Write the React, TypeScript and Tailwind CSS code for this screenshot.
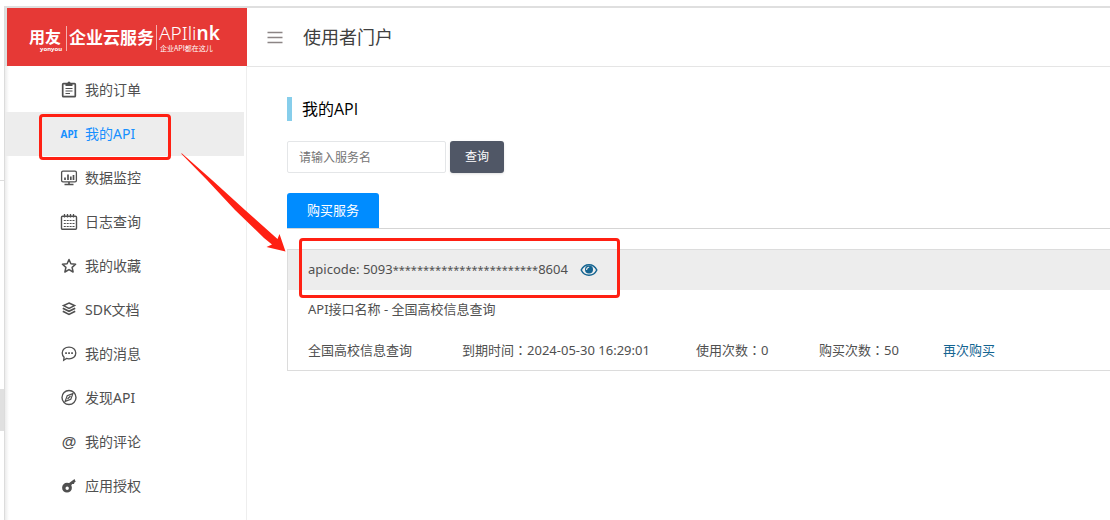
import React from 'react';

const iconProps = {
  viewBox: '0 0 18 18',
  className: 'h-[18px] w-[18px] shrink-0',
  fill: 'none',
  stroke: 'currentColor',
  strokeWidth: 1.5,
  'aria-hidden': true,
};

const OrderIcon = () => (
  <svg {...iconProps}>
    <rect x="2.7" y="2.7" width="12.6" height="13" rx=".8" strokeWidth="1.7" />
    <path d="M5.5 2h2a1.5 1.5 0 0 1 3 0h2v3h-7z" fill="currentColor" stroke="none" />
    <path d="M5.5 7.5h7M5.5 10h7M5.5 12.5h4.5" strokeWidth="1.2" />
  </svg>
);

const MonitorIcon = () => (
  <svg {...iconProps}>
    <rect x="1.6" y="2.2" width="14.8" height="10.6" rx="1.4" strokeWidth="1.3" />
    <path d="M5 8.5V11M8 5.5V11M10.800 7.500V11M13.500 6v5" strokeWidth="1.700" />
    <path d="M9 13v2M4.500 15.500h9" strokeWidth="1.600" />
  </svg>
);

const CalendarIcon = () => (
  <svg {...iconProps}>
    <rect x="1.500" y="3.200" width="15" height="13" rx="1" strokeWidth="1.400" />
    <path d="M4.500 1v3.500M7.500 1v3.500M10.500 1v3.500M13.500 1v3.500" strokeWidth="1.300" />
    <path d="M3.800 7.500h11M3.800 10.500h11M3.800 13.500h11" strokeWidth="1.200" strokeDasharray="2 .9" />
  </svg>
);

const StarIcon = () => (
  <svg {...iconProps}>
    <path
      d="M9 2.500l1.900 4.300 4.700.5-3.500 3.100 1 4.600L9 12.600 4.900 15l1-4.600-3.500-3.100 4.700-.5z"
      strokeWidth="1.500"
      strokeLinejoin="round"
    />
  </svg>
);

const LayersIcon = () => (
  <svg {...iconProps}>
    <path d="M9 2l5.500 2.600L9 7.300 3.500 4.600z" strokeWidth="1.500" />
    <path d="M2.800 7.200L9 10.300l6.200-3.100M2.800 10.300L9 13.400l6.200-3.100" strokeWidth="1.700" />
  </svg>
);

const MessageIcon = () => (
  <svg {...iconProps}>
    <path
      d="M9 2.200c3.900 0 6.800 2.400 6.800 5.800S12.900 13.800 9 13.800c-.9 0-1.700-.1-2.500-.4L3.700 15.200l.4-3C2.800 11 2.200 9.700 2.200 8c0-3.400 2.900-5.800 6.800-5.800z"
      strokeWidth="1.300"
    />
    <path d="M5.200 7.200h1.700v1.700H5.200zM8.200 7.200h1.700v1.700H8.200zM11.200 7.200h1.700v1.700h-1.700z" fill="currentColor" stroke="none" />
  </svg>
);

const CompassIcon = () => (
  <svg {...iconProps}>
    <circle cx="9" cy="8.500" r="7" strokeWidth="1.400" />
    <path d="M12.900 4.600l-2.100 5.600-5.700 2.200 2.100-5.700z" strokeWidth="1.200" />
    <path d="M7.500 10l3-3" strokeWidth="1.200" />
  </svg>
);

const AtIcon = () => (
  <span className="w-[18px] shrink-0 text-center font-['Liberation_Sans',sans-serif] text-[15px] font-bold leading-4" aria-hidden="true">
    @
  </span>
);

const KeyIcon = () => (
  <svg {...iconProps}>
    <path
      d="M7 5.800a4.900 4.900 0 1 0 0 9.800 4.900 4.900 0 0 0 0-9.800zm.2 3.700a1.700 1.700 0 1 1 0 3.400 1.700 1.700 0 0 1 0-3.400z"
      fill="currentColor"
      fillRule="evenodd"
      stroke="none"
    />
    <path d="M8.500 6.500L14.500 2l1.200 2.800-1.300.6-.4 1.600-1.800-.1-1.200 1.600z" fill="currentColor" stroke="none" />
  </svg>
);

const ApiIcon = () => (
  <span className="w-[18px] shrink-0 text-center font-['Noto_Sans',sans-serif] text-[10px] font-bold leading-4" aria-hidden="true">
    API
  </span>
);

const menu = [
  { label: '我的订单', icon: OrderIcon },
  { label: '我的API', icon: ApiIcon, active: true },
  { label: '数据监控', icon: MonitorIcon },
  { label: '日志查询', icon: CalendarIcon },
  { label: '我的收藏', icon: StarIcon },
  { label: 'SDK文档', icon: LayersIcon },
  { label: '我的消息', icon: MessageIcon },
  { label: '发现API', icon: CompassIcon },
  { label: '我的评论', icon: AtIcon },
  { label: '应用授权', icon: KeyIcon },
];

const Logo = () => (
  <svg
    viewBox="0 0 240 58"
    className="h-[58px] w-60 bg-[#e63936] font-['Noto_Sans_CJK_SC',sans-serif]"
    fill="#fff"
    role="img"
    aria-label="用友 企业云服务 APIlink"
  >
    <text x="22" y="35" fontSize="16" fontWeight="700">用友</text>
    <text x="33" y="43" fontSize="6" fontWeight="700" fontFamily="Noto Sans">yonyou</text>
    <path d="M59.500 18v25M149.500 17v25" stroke="#fff" strokeOpacity=".6" />
    <text x="62" y="36" fontSize="17" fontWeight="700">企业云服务</text>
    <text x="152" y="32" fontSize="19" fontWeight="300" fontFamily="Noto Sans">
      APIli<tspan fontWeight="600">nk</tspan>
    </text>
    <text x="153" y="43" fontSize="7">企业API都在这儿</text>
  </svg>
);

const Colon = () => <span className="font-['Noto_Sans_CJK_TC',sans-serif]">：</span>;

const EyeIcon = () => (
  <svg viewBox="0 0 18 14" className="h-[14px] w-[18px]" fill="none" stroke="currentColor" aria-hidden="true">
    <path d="M1.200 7C2.800 3.600 5.500 1.700 9 1.700S15.200 3.600 16.800 7c-1.600 3.400-4.300 5.300-7.800 5.300S2.800 10.400 1.200 7z" strokeWidth="1.500" />
    <circle cx="9" cy="6.500" r="4" fill="currentColor" stroke="none" />
    <path d="M6.600 7a2.400 2.400 0 0 1 2.600-2.700" stroke="#ededed" strokeWidth="1.100" />
  </svg>
);

const Annotations = () => (
  <div className="pointer-events-none absolute inset-0">
    <div className="absolute left-[39px] top-[114px] h-[46px] w-[132px] rounded border-3 border-[#ff2013]" />
    <div className="absolute left-[299px] top-[238px] h-[60px] w-[321px] rounded border-3 border-[#ff2013]" />
    <svg viewBox="0 0 106 100" className="absolute left-[180px] top-[153px] h-[100px] w-[106px]" aria-hidden="true">
      <path d="M1 .5L2 .5 32 27 65 57 97.500 86 99.500 81 105.500 98.500 86.500 94 92 91.500 84 85 55 57 27 27z" fill="#ff2013" />
    </svg>
  </div>
);

const App = () => {
  return (
    <div className="relative flex min-h-screen bg-white font-['Noto_Sans','Noto_Sans_CJK_SC',sans-serif] text-[#505050]">
      <div className="flex w-1 shrink-0 flex-col">
        <div className="h-[181px] border-b border-[#ddd]" />
        <div className="mt-52 h-[42px] bg-[#e0e0e0]" />
      </div>

      <div className="flex min-w-0 flex-1 flex-col">
        <div className="h-2 shrink-0 border-b-2 border-[#dfdfdf]" />
        <div className="flex flex-1">
          <aside className="flex w-[243px] shrink-0 flex-col border-l border-[#dcdcdc]">
            <div className="flex justify-end bg-[#dde0e0]">
              <Logo />
            </div>
            <nav className="flex-1 border-r border-[#eee] bg-linear-to-r from-[#ececec] to-white to-[4px] pt-0.5">
              <ul>
                {menu.map(({ label, icon: Icon, active }) => (
                  <li key={label} className="pr-0.5">
                    <a
                      href="#"
                      className={
                        active
                          ? 'flex h-11 items-center gap-[7px] bg-[#ededed] pl-[55px] text-sm text-[#1890ff]'
                          : 'flex h-11 items-center gap-[7px] pl-[55px] text-sm'
                      }
                    >
                      <Icon />
                      <span>{label}</span>
                    </a>
                  </li>
                ))}
              </ul>
            </nav>
          </aside>

          <div className="min-w-0 flex-1">
            <header className="flex h-[59px] items-center gap-5 border-b border-[#e5e5e5] pl-5">
              <button type="button" aria-label="菜单" className="text-[#8c8585]">
                <svg viewBox="0 0 16 14" className="h-[14px] w-4" stroke="currentColor" aria-hidden="true">
                  <path d="M.5 2.500h15M.5 7.500h15M.5 12.500h15" strokeWidth="1.700" />
                </svg>
              </button>
              <h1 className="text-lg text-[#404040]">使用者门户</h1>
            </header>

            <main className="pl-10 pt-[30px]">
              <h2 className="border-l-5 border-[#87ceeb] pl-2.5 font-['Open_Sans','Noto_Sans_CJK_SC',sans-serif] text-base leading-6 text-black">
                我的API
              </h2>

              <form className="mt-5 flex gap-1" onSubmit={(e) => e.preventDefault()}>
                <input
                  type="text"
                  aria-label="服务名"
                  placeholder="请输入服务名"
                  className="h-8 w-[159px] rounded-xs border border-[#e4e6e8] px-[11px] text-xs placeholder:text-[#757575]"
                />
                <button type="submit" className="h-8 w-[54px] rounded-[3px] bg-[#505766] text-xs text-white shadow-sm">
                  查询
                </button>
              </form>

              <div className="mt-5 flex border-b border-[#d5d5d5]">
                <button type="button" className="h-[35px] w-[92px] rounded-t-[3px] bg-[#008cff] text-[13px] text-white">
                  购买服务
                </button>
              </div>

              <section className="mt-5 border-y border-l border-[#dcdcdc] text-[13px]">
                <div className="flex h-10 items-center bg-[#ededed] pl-5">
                  <span>
                    apicode: 5093<span className="text-[11px]">************************</span>8604
                  </span>
                  <button type="button" aria-label="显示 apicode" className="ml-3 text-[#146491]">
                    <EyeIcon />
                  </button>
                </div>
                <p className="flex h-10 items-center pl-5">API接口名称 - 全国高校信息查询</p>
                <div className="flex h-10 items-baseline whitespace-nowrap pl-5 leading-10">
                  <span className="w-[154px]">全国高校信息查询</span>
                  <span className="w-[234px]">到期时间<Colon />2024-05-30 16:29:01</span>
                  <span className="w-[123px]">使用次数<Colon />0</span>
                  <span className="w-[124px]">购买次数<Colon />50</span>
                  <a href="#" className="text-[#146491]">再次购买</a>
                </div>
              </section>
            </main>
          </div>
        </div>
      </div>

      <Annotations />
    </div>
  );
};

export default App;
